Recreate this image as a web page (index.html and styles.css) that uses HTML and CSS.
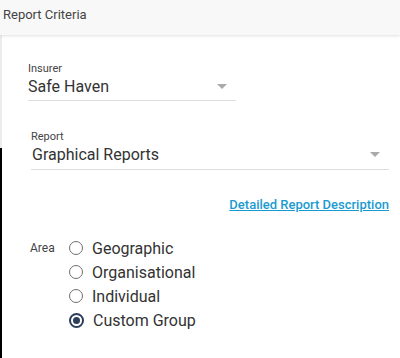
FILE: index.html
```html
<!DOCTYPE html>
<html lang="en">
<head>
    <meta charset="UTF-8">
    <title>Report Criteria</title>
    <link rel="stylesheet" href="styles.css">
</head>
<body>
    <div class="panel-header">Report Criteria</div>

    <div class="panel-body">
        <div class="field field-insurer">
            <label class="field-label">Insurer</label>
            <div class="select">
                <span class="select-value">Safe Haven</span>
                <span class="caret"></span>
            </div>
        </div>

        <div class="field field-report">
            <label class="field-label">Report</label>
            <div class="select">
                <span class="select-value">Graphical Reports</span>
                <span class="caret"></span>
            </div>
        </div>

        <div class="link-row">
            <a href="#" class="desc-link">Detailed Report Description</a>
        </div>

        <div class="area">
            <span class="area-label">Area</span>
            <div class="radio-list">
                <label class="radio"><span class="radio-dot"></span>Geographic</label>
                <label class="radio"><span class="radio-dot"></span>Organisational</label>
                <label class="radio"><span class="radio-dot"></span>Individual</label>
                <label class="radio checked"><span class="radio-dot"></span>Custom Group</label>
            </div>
        </div>
    </div>
</body>
</html>
```

FILE: styles.css
```css
body {
    margin: 0;
    font-family: Roboto, 'Liberation Sans', Arial, sans-serif;
    color: #333;
    background: #fff;
    overflow: hidden;
}

.panel-header {
    height: 35px;
    line-height: 30px;
    padding-left: 3px;
    font-size: 13px;
    color: #444;
    background-color: #f8f8f8;
    box-shadow: 0 1px 3px rgba(0,0,0,0.12);
    position: relative;
    z-index: 1;
}

.panel-body {
    height: 323px;
    padding-top: 27px;
    border-left: 2px solid #ececec;
    box-sizing: border-box;
    position: relative;
}

.panel-body::after {
    content: "";
    position: absolute;
    left: -2px;
    top: 113px;
    bottom: 0;
    width: 2px;
    background: #000;
}

.field {
    display: flex;
    flex-direction: column;
}

.field-label {
    font-size: 11px;
    color: #444;
    line-height: 13px;
}

.select {
    display: flex;
    align-items: center;
    justify-content: space-between;
    border-bottom: 1px solid #ddd;
    height: 26px;
    padding-bottom: 3px;
    box-sizing: border-box;
}

.select-value {
    font-size: 16px;
    color: #333;
}

.caret {
    width: 0;
    height: 0;
    border-left: 5px solid transparent;
    border-right: 5px solid transparent;
    border-top: 5px solid #aaa;
    margin-right: 9px;
}

.field-insurer {
    margin-left: 26px;
    width: 208px;
}

.field-report {
    margin: 29px 0 0 29px;
    width: 358px;
}

.field-report .select {
    padding-left: 1px;
    height: 27px;
}

.link-row {
    display: flex;
    justify-content: flex-end;
    padding-right: 11px;
    margin-top: 27px;
}

.desc-link {
    font-size: 13px;
    line-height: 15px;
    font-weight: 500;
    color: #1a9bd0;
    text-decoration: underline;
}

.area {
    display: flex;
    margin: 24px 0 0 28px;
}

.area-label {
    font-size: 12px;
    color: #444;
    line-height: 24px;
    width: 39px;
}

.radio-list {
    display: flex;
    flex-direction: column;
}

.radio {
    display: flex;
    align-items: center;
    height: 24px;
    font-size: 16px;
    color: #333;
}

.radio-dot {
    width: 12px;
    height: 12px;
    border: 1.5px solid #6f6f6f;
    border-radius: 50%;
    margin-right: 9px;
    position: relative;
}

.radio.checked .radio-dot {
    border: 2px solid #2c3e5a;
    width: 11px;
    height: 11px;
}

.radio.checked .radio-dot::after {
    content: "";
    position: absolute;
    left: 2px;
    top: 2px;
    width: 7px;
    height: 7px;
    border-radius: 50%;
    background: #2c3e5a;
}
```
